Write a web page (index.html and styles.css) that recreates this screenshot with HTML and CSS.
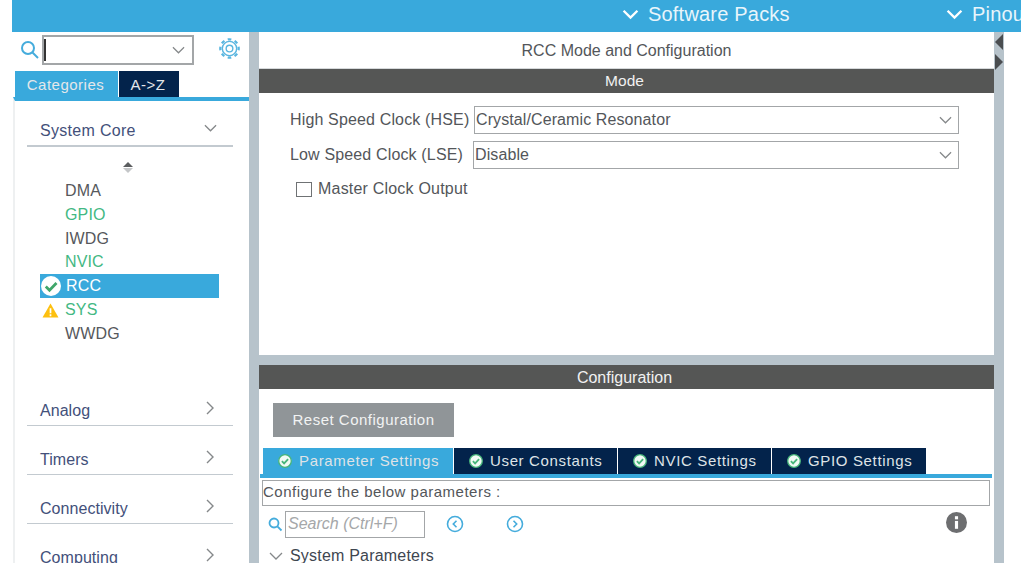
FILE: index.html
```html
<!DOCTYPE html>
<html lang="en">
<head>
<meta charset="utf-8">
<title>RCC Mode and Configuration</title>
<link rel="stylesheet" href="styles.css">
</head>
<body>
<div class="app">
  <header class="topbar">
    <div class="top-item top-software"><svg class="top-chev" viewBox="0 0 16 10"><path d="M1.5 1.5 8 8l6.5-6.5"/></svg><span>Software Packs</span></div>
    <div class="top-item"><svg class="top-chev" viewBox="0 0 16 10"><path d="M1.5 1.5 8 8l6.5-6.5"/></svg><span>Pinou</span></div>
  </header>
  <div class="main">
    <aside class="sidebar">
      <div class="search-row">
        <svg class="search-icon" viewBox="0 0 20 20"><circle cx="8" cy="8" r="6"/><path d="m12.5 12.5 5.5 5.5"/></svg>
        <div class="search-box"><span class="caret"></span><svg class="chev-sm" viewBox="0 0 14 8"><path d="m1 1 6 6 6-6"/></svg></div>
        <svg class="gear" viewBox="0 0 24 24"><circle class="gear-teeth" cx="12" cy="12" r="10.500" pathLength="32" transform="rotate(-11 12 12)"/><circle cx="12" cy="12" r="8.200"/><circle cx="12" cy="12" r="3.800"/></svg>
      </div>
      <div class="side-tabs">
        <div class="side-tab active">Categories</div>
        <div class="side-tab">A-&gt;Z</div>
      </div>
      <div class="cat-panel">
        <div class="cat-head first"><span>System Core</span><svg class="cat-chev" viewBox="0 0 14 8"><path d="m1 1 6 6 6-6"/></svg></div>
        <div class="sort-mark"><i class="up"></i><i class="down"></i></div>
        <ul class="peri-list">
          <li class="peri">DMA</li>
          <li class="peri green">GPIO</li>
          <li class="peri">IWDG</li>
          <li class="peri green">NVIC</li>
          <li class="peri selected"><svg class="peri-icon" viewBox="0 0 20 20"><circle cx="10" cy="10" r="10" fill="#fff"/><path d="m4.800 10.500 3.700 3.700L15.500 7" fill="none" stroke="#3fa66a" stroke-width="2.800"/></svg>RCC</li>
          <li class="peri green warn"><svg class="peri-icon" viewBox="0 0 18 16"><path d="M9 0.500 17.500 15.500H.5z" fill="#fdc010"/><path d="M8.100 5.500h1.800v5.500H8.100zM8.100 12h1.800v2H8.100z" fill="#fff"/></svg>SYS</li>
          <li class="peri">WWDG</li>
        </ul>
        <div class="cat-head"><span>Analog</span><svg class="cat-chev right" viewBox="0 0 8 14"><path d="m1 1 6 6-6 6"/></svg></div>
        <div class="cat-head"><span>Timers</span><svg class="cat-chev right" viewBox="0 0 8 14"><path d="m1 1 6 6-6 6"/></svg></div>
        <div class="cat-head"><span>Connectivity</span><svg class="cat-chev right" viewBox="0 0 8 14"><path d="m1 1 6 6-6 6"/></svg></div>
        <div class="cat-head"><span>Computing</span><svg class="cat-chev right" viewBox="0 0 8 14"><path d="m1 1 6 6-6 6"/></svg></div>
      </div>
    </aside>
    <div class="splitter"></div>
    <section class="center">
      <div class="mode-pane">
        <div class="pane-title">RCC Mode and Configuration</div>
        <div class="dark-bar">Mode</div>
        <div class="mode-form">
          <div class="form-row">
            <label class="form-label">High Speed Clock (HSE)</label>
            <div class="select"><span>Crystal/Ceramic Resonator</span><svg class="chev-sm" viewBox="0 0 14 8"><path d="m1 1 6 6 6-6"/></svg></div>
          </div>
          <div class="form-row second">
            <label class="form-label">Low Speed Clock (LSE)</label>
            <div class="select"><span>Disable</span><svg class="chev-sm" viewBox="0 0 14 8"><path d="m1 1 6 6 6-6"/></svg></div>
          </div>
          <div class="check-row"><span class="checkbox"></span><span>Master Clock Output</span></div>
        </div>
      </div>
      <div class="h-splitter"></div>
      <div class="config-pane">
        <div class="dark-bar">Configuration</div>
        <div class="reset-wrap"><div class="reset">Reset Configuration</div></div>
        <div class="cfg-tabs">
          <div class="cfg-tab active"><svg class="tick" viewBox="0 0 14 14"><circle cx="7" cy="7" r="6.300"/><path d="m3.900 7.200 2.200 2.200 4-4.200"/></svg>Parameter Settings</div>
          <div class="cfg-tab user"><svg class="tick" viewBox="0 0 14 14"><circle cx="7" cy="7" r="6.300"/><path d="m3.900 7.200 2.200 2.200 4-4.200"/></svg>User Constants</div>
          <div class="cfg-tab nvic"><svg class="tick" viewBox="0 0 14 14"><circle cx="7" cy="7" r="6.300"/><path d="m3.900 7.200 2.200 2.200 4-4.200"/></svg>NVIC Settings</div>
          <div class="cfg-tab gpio"><svg class="tick" viewBox="0 0 14 14"><circle cx="7" cy="7" r="6.300"/><path d="m3.900 7.200 2.200 2.200 4-4.200"/></svg>GPIO Settings</div>
        </div>
        <div class="cfg-body">
          <div class="hint-box">Configure the below parameters :</div>
          <div class="tool-row">
            <svg class="mini-search" viewBox="0 0 20 20"><circle cx="8" cy="8" r="6"/><path d="m12.500 12.500 5.500 5.500"/></svg>
            <div class="param-search">Search (Ctrl+F)</div>
            <svg class="nav-btn first-nav" viewBox="0 0 18 18"><circle cx="9" cy="9" r="7.500"/><path d="M10.500 5.800 7.300 9l3.200 3.200"/></svg>
            <svg class="nav-btn" viewBox="0 0 18 18"><circle cx="9" cy="9" r="7.500"/><path d="M7.500 5.800 10.700 9l-3.200 3.200"/></svg>
            <svg class="info" viewBox="0 0 20 20"><circle cx="10" cy="10" r="10" fill="#6d6e70"/><rect x="8.500" y="8.500" width="3" height="7.500" fill="#fff"/><rect x="8.500" y="4" width="3" height="3" fill="#fff"/></svg>
          </div>
          <div class="group-row"><svg class="group-chev" viewBox="0 0 14 8"><path d="m1 1 6 6 6-6"/></svg>System Parameters</div>
        </div>
      </div>
    </section>
    <div class="splitter collapse">
      <i class="arrow-left"></i>
      <i class="arrow-right"></i>
    </div>
  </div>
</div>
</body>
</html>
```
FILE: styles.css
```css
* { box-sizing: border-box; }
html, body { margin: 0; height: 563px; overflow: hidden; background: #fff; }
body { font-family: "Liberation Sans", Arial, sans-serif; color: #53565a; font-size: 16px; }
.app { padding-left: 12px; height: 563px; display: flex; flex-direction: column; }

.topbar { height: 32px; background: #39a9dc; flex: none; display: flex; align-items: center; padding-left: 610px; padding-bottom: 4px; white-space: nowrap; overflow: hidden; color: #e8f5fb; font-size: 20px; letter-spacing: .2px; }
.top-item { display: flex; align-items: center; gap: 9px; flex: none; }
.top-software { width: 324px; }
.top-chev { width: 17px; height: 11px; fill: none; stroke: #fff; stroke-width: 2.200; }

.main { flex: 1; display: flex; min-height: 0; }
.sidebar { width: 237px; flex: none; display: flex; flex-direction: column; overflow: hidden; }
.splitter { width: 10px; flex: none; background: #b7c3cb; }
.collapse { position: relative; }
.arrow-left, .arrow-right { position: absolute; width: 0; height: 0; border-top: 8px solid transparent; border-bottom: 8px solid transparent; }
.arrow-left { left: 1px; top: 2px; border-right: 8px solid #4a4d50; }
.arrow-right { left: 1px; top: 22px; border-left: 8px solid #4a4d50; }

.search-row { height: 39px; flex: none; display: flex; align-items: flex-start; padding: 3px 0 0 8px; }
.search-icon { width: 20px; height: 20px; margin-top: 5px; fill: none; stroke: #45acdc; stroke-width: 2; }
.search-box { width: 152px; height: 30px; margin-left: 2px; border: 2px solid #a3a6a8; display: flex; align-items: center; justify-content: space-between; padding-right: 7px; }
.caret { width: 2px; height: 22px; background: #333; }
.chev-sm { width: 13px; height: 8px; fill: none; stroke: #85888a; stroke-width: 1.300; }
.gear { width: 21px; height: 21px; margin: 3px 0 0 25px; fill: none; stroke: #5ab6e0; stroke-width: 1.600; }
.gear-teeth { stroke-width: 2.600; stroke-dasharray: 2 2; }

.side-tabs { display: flex; height: 26px; margin-left: 3px; gap: 1px; flex: none; }
.side-tab { background: #03234b; color: #e4e7ea; font-size: 15px; letter-spacing: .5px; display: flex; align-items: center; justify-content: center; width: 60px; padding-right: 2px; }
.side-tab.active { background: #39a9dc; width: 103px; }

.cat-panel { flex: 1; margin-left: 1px; border-top: 4px solid #39a9dc; border-left: 2px solid #eef0f1; padding-left: 12px; padding-right: 16px; }
.cat-head { height: 49px; padding: 25px 0 0 13px; border-bottom: 1px solid #c3cad0; display: flex; justify-content: space-between; align-items: flex-start; color: #43507a; font-size: 16px; letter-spacing: .05px; }
.cat-head.first { height: 46px; border-bottom-width: 2px; padding-top: 21px; letter-spacing: .3px; }
.cat-chev { width: 13px; height: 8px; margin: 2px 16px 0 0; fill: none; stroke: #85888a; stroke-width: 1.400; }
.cat-chev.right { width: 8px; height: 14px; margin: -1px 19px 0 0; }
.sort-mark { height: 26px; display: flex; flex-direction: column; align-items: center; justify-content: flex-end; gap: 1px; padding-right: 1px; width: 203px; }
.up, .down { width: 0; height: 0; border-left: 5px solid transparent; border-right: 5px solid transparent; }
.up { border-bottom: 5px solid #5b5d5f; }
.down { border-top: 5px solid #c4c6c8; }
.peri-list { list-style: none; margin: 6px 0 0; padding: 0 0 0 13px; height: 198px; }
.peri { height: 23.800px; line-height: 23.800px; width: 179px; padding-left: 25px; color: #56585c; position: relative; letter-spacing: .15px; }
.peri.green { color: #43b883; }
.peri.selected { background: #39a9dc; color: #fff; padding-left: 26px; }
.peri-icon { position: absolute; left: 1px; top: 2px; width: 20px; height: 20px; }
.warn .peri-icon { left: 2px; top: 5px; width: 17px; height: 15px; }

.center { width: 735px; flex: none; display: flex; flex-direction: column; }
.mode-pane { height: 323px; flex: none; }
.pane-title { height: 37px; display: flex; align-items: center; justify-content: center; padding-top: 1px; border-bottom: 1px solid #d6d9db; }
.dark-bar { height: 24px; background: #555655; color: #f1f1f1; display: flex; align-items: center; justify-content: center; font-size: 16px; padding: 1px 4px 0 0; }
.mode-pane .dark-bar { padding: 0 4px 1px 0; font-size: 15.500px; }
.mode-form { padding: 13px 0 0 31px; }
.form-row { display: flex; align-items: center; height: 28px; }
.form-row.second { margin-top: 7px; }
.form-label { width: 184px; flex: none; letter-spacing: .15px; }
.second .form-label { width: 183px; }
.select { flex: none; display: flex; align-items: center; justify-content: space-between; height: 28px; border: 1px solid #a3a6a8; width: 485px; padding: 0 6px 0 1px; letter-spacing: .1px; }
.second .select { width: 486px; }
.check-row { display: flex; align-items: center; gap: 6px; margin: 7px 0 0 6px; height: 26px; letter-spacing: .2px; }
.checkbox { width: 16px; height: 15px; border: 1px solid #6f7274; }
.h-splitter { height: 10px; flex: none; background: #b7c3cb; }
.config-pane { flex: 1; overflow: hidden; }
.reset-wrap { padding: 14px 0 0 14px; }
.reset { width: 181px; height: 34px; background: #909598; color: #f2f3f3; font-size: 15px; display: flex; align-items: center; justify-content: center; letter-spacing: .5px; padding-bottom: 1px; }

.cfg-tabs { display: flex; height: 26px; margin: 11px 0 0 4px; gap: 1px; }
.cfg-tab { background: #03234b; color: #dfe3e7; font-size: 15px; display: flex; align-items: center; gap: 7px; padding: 0 0 1px 15px; letter-spacing: .65px; white-space: nowrap; width: 163px; }
.cfg-tab.active { background: #39a9dc; width: 190px; }
.cfg-tab.nvic { width: 153px; }
.cfg-tab.gpio { width: 154px; }
.tick { width: 14px; height: 14px; flex: none; fill: #f1faf5; stroke: #47b57a; stroke-width: 1.300; }
.tick path { fill: none; stroke-width: 1.800; }
.cfg-body { border-top: 4px solid #39a9dc; margin-left: 1px; margin-right: 2px; }
.hint-box { height: 26px; margin: 2px 2px 0 2px; border: 1px solid #a3a6a8; font-size: 15px; display: flex; align-items: center; letter-spacing: .5px; padding-bottom: 3px; }
.tool-row { height: 38px; display: flex; align-items: center; padding: 0 0 2px 8px; position: relative; }
.mini-search { width: 15px; height: 15px; fill: none; stroke: #45acdc; stroke-width: 2.400; }
.param-search { width: 140px; height: 27px; margin-left: 2px; border: 1px solid #a3a6a8; color: #a5a7a9; font-style: italic; display: flex; align-items: center; padding-left: 2px; }
.nav-btn { width: 18px; height: 18px; fill: none; stroke: #45acdc; stroke-width: 1.600; margin-left: 42px; }
.first-nav { margin-left: 21px; }
.info { width: 21px; height: 21px; position: absolute; right: 25px; top: 6px; }
.group-row { display: flex; align-items: center; gap: 7px; padding-left: 9px; height: 24px; color: #3e4650; letter-spacing: .2px; }
.group-chev { width: 14px; height: 8px; fill: none; stroke: #85888a; stroke-width: 1.300; }
```
